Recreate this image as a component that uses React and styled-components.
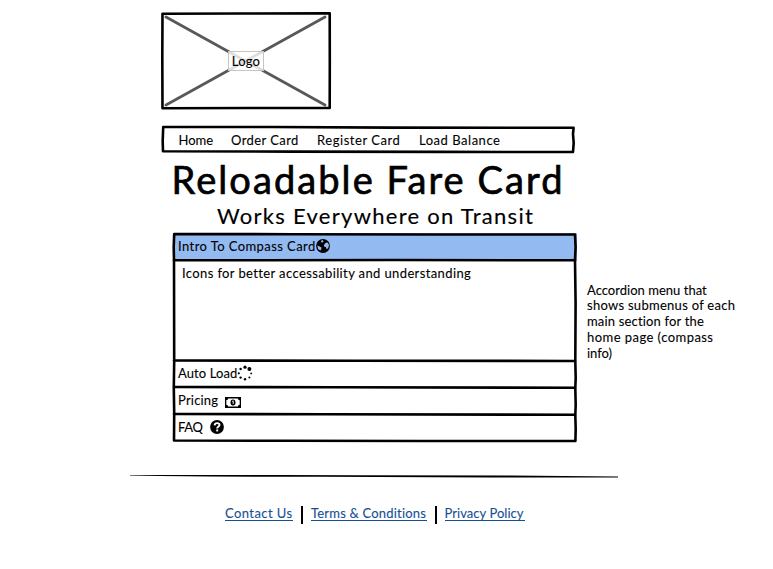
import React from "react";
import styled, { createGlobalStyle } from "styled-components";

const GlobalStyle = createGlobalStyle`
  *, *::before, *::after { box-sizing: border-box; }
  body { margin: 0; background: #fff; }
`;

const Page = styled.div`
  width: 773px;
  height: 569px;
  display: flex;
  flex-direction: column;
  align-items: flex-start;
  overflow: hidden;
  color: #000;
  font: 13px/16px Lato, "Open Sans", sans-serif;
  -webkit-text-stroke: 0.1px currentColor;
`;

const Outline = styled.svg`
  position: absolute;
  inset: 0;
  width: 100%;
  height: 100%;
  overflow: visible;
  pointer-events: none;
  fill: none;
  stroke: #000;
  stroke-width: 2.6;
  stroke-linecap: round;
  stroke-linejoin: round;
`;

const LogoBox = styled.div`
  position: relative;
  width: 170px;
  height: 97px;
  margin: 12px 0 0 161px;
  display: flex;
  align-items: center;
  justify-content: center;
`;

const Cross = styled.path`
  stroke: #595959;
  stroke-width: 2.8;
`;

const LogoLabel = styled.span`
  position: relative;
  width: 36px;
  height: 20px;
  border: 1px solid #c4c4c4;
  background: rgba(255, 255, 255, 0.8);
  text-align: center;
  line-height: 18px;
  letter-spacing: 0.2px;
`;

const Nav = styled.nav`
  position: relative;
  width: 413px;
  height: 27px;
  margin: 17px 0 0 162px;
  padding: 1px 0 0 16.5px;
  display: flex;
  align-items: center;
`;

const Label = styled.span`
  letter-spacing: ${(p) => p.$track}px;
  white-space: nowrap;
`;

const NavItem = styled(Label)`
  flex: 0 0 ${(p) => p.$width}px;
`;

const Title = styled.h1`
  margin: 0 0 0 171.5px;
  font-size: 38px;
  font-weight: 400;
  line-height: 53px;
  letter-spacing: 2.08px;
  white-space: nowrap;
  -webkit-text-stroke: 0.7px #000;
`;

const Subtitle = styled.h2`
  margin: 0 0 9px 217px;
  font-size: 22px;
  font-weight: 400;
  line-height: 19px;
  height: 18px;
  letter-spacing: 1.28px;
  white-space: nowrap;
  -webkit-text-stroke: 0.15px #000;
`;

const Content = styled.main`
  display: flex;
  align-items: flex-start;
  gap: 10px;
  margin-left: 173px;
`;

const Accordion = styled.section`
  position: relative;
  width: 404px;
  height: 209px;
  display: grid;
  grid-template-rows: 28px 100px repeat(3, 27px);
`;

const Row = styled.div`
  display: flex;
  align-items: center;
  gap: ${(p) => p.$gap}px;
  padding: 0 0 ${(p) => (p.$open ? 2 : 3)}px 5px;
  background: ${(p) => (p.$open ? "#94baf2" : "transparent")};
`;

const Panel = styled.div`
  padding: 4px 0 0 9px;
`;

const Icon = styled.svg`
  flex: none;
  width: ${(p) => p.$w}px;
  height: ${(p) => p.$h}px;
  margin-top: ${(p) => p.$drop || 0}px;
`;

const Note = styled.aside`
  display: flex;
  flex-direction: column;
  margin-top: 49.6px;
  line-height: 15.8px;
`;

const Rule = styled.svg`
  display: block;
  width: 488px;
  height: 4px;
  margin: 32px 0 0 130px;
`;

const Footer = styled.footer`
  display: flex;
  align-items: flex-start;
  margin: 28px 0 0 225px;
`;

const Link = styled.a`
  color: #154f93;
  height: 15px;
  line-height: 14px;
  border-bottom: 1px solid #154f93;
  letter-spacing: ${(p) => p.$track}px;
  width: ${(p) => p.$width}px;
  white-space: nowrap;
`;

const Divider = styled.span`
  width: 2px;
  height: 18px;
  margin: 0 8px;
  background: #000;
`;

const NAV = [
  { text: "Home", width: 52.5, track: 0 },
  { text: "Order Card", width: 86, track: 0.42 },
  { text: "Register Card", width: 102, track: 0.55 },
  { text: "Load Balance", width: 84, track: 0.52 },
];

const NOTE = [
  { text: "Accordion menu that", track: 0.02 },
  { text: "shows submenus of each", track: 0.28 },
  { text: "main section for the", track: 0.17 },
  { text: "home page (compass", track: 0.45 },
  { text: "info)", track: 0 },
];

const Globe = () => (
  <Icon $w={14} $h={14} viewBox="0 0 14 14">
    <circle cx="7" cy="7" r="6.9" />
    <path
      fill="#94baf2"
      d="M5.4 1.5 7.2 1.1 6.9 2.1 7.6 2.7 6.4 3.6 5.6 3.1 4.6 3.5ZM8.6 5 10.1 3.6 11.8 3.8 13 6.1 12.5 8.2 11.1 10.2 10.2 9.5 9.9 7.9 8.4 7.7 7.8 6.4ZM1.3 6.5 3.2 7.3 5.5 8.6 5.3 10 4.5 11.6 2.2 10.2Z"
    />
  </Icon>
);

const Spinner = () => (
  <Icon $w={16} $h={16} $drop={-1} viewBox="0 0 16 16">
    <circle cx="8" cy="2.2" r="1.6" />
    <circle cx="12.4" cy="4" r="2" />
    <circle cx="14.2" cy="8.4" r="0.9" />
    <circle cx="12.4" cy="12.6" r="1" />
    <circle cx="8" cy="14.2" r="1.2" />
    <circle cx="3.6" cy="12.6" r="1.2" />
    <circle cx="1.8" cy="8.3" r="1.1" />
    <circle cx="3.6" cy="4" r="1.2" />
  </Icon>
);

const Money = () => (
  <Icon $w={16} $h={11} $drop={4} viewBox="0 0 16 11">
    <rect width="16" height="11" />
    <path fill="#fff" d="M3.2 1.5H12.8A2 2 0 0 0 14.7 3.3V7.7A2 2 0 0 0 12.8 9.5H3.2A2 2 0 0 0 1.3 7.7V3.3A2 2 0 0 0 3.2 1.5Z" />
    <ellipse cx="8" cy="5.5" rx="2.5" ry="3" />
    <path stroke="#fff" strokeWidth="0.9" fill="none" d="M7.2 4.5 8.2 3.8V7" />
  </Icon>
);

const Help = () => (
  <Icon $w={14} $h={14} viewBox="0 0 14 14">
    <circle cx="7" cy="7" r="6.9" />
    <path fill="none" stroke="#fff" strokeWidth="1.9" d="M4.6 5.3C4.8 3.5 6 3.1 7.1 3.1 8.5 3.1 9.5 3.9 9.5 5 9.5 6.6 7.2 6.5 7.2 8.5" />
    <path fill="#fff" d="M6.2 9.5h2v1.9h-2z" />
  </Icon>
);

export default function App() {
  return (
    <Page>
      <GlobalStyle />
      <LogoBox>
        <Outline viewBox="0 0 170 97">
          <Cross d="M5 5 164 93M164 5 5 93" />
          <path d="M1.5 1.8 80 1.5 168.7 1.2 168.8 50 168.7 96 90 96 1.5 96.3 1.3 45Z" />
        </Outline>
        <LogoLabel>Logo</LogoLabel>
      </LogoBox>

      <Nav>
        <Outline viewBox="0 0 413 27">
          <path d="M1.2 1 110 1 230 1.6 411.6 1.8 411 8 411.7 17 411 26 280 25.9 130 25.6 1 25.2 .7 15Z" />
        </Outline>
        {NAV.map((n) => (
          <NavItem key={n.text} $width={n.width} $track={n.track}>
            {n.text}
          </NavItem>
        ))}
      </Nav>

      <Title>Reloadable Fare Card</Title>
      <Subtitle>Works Everywhere on Transit</Subtitle>

      <Content>
        <Accordion>
          <Row $open $gap={0}>
            <Label $track={0.42}>Intro To Compass Card</Label>
            <Globe />
          </Row>
          <Panel>
            <Label $track={0.38}>Icons for better accessability and understanding</Label>
          </Panel>
          <Row $gap={0}>
            <Label $track={0.1}>Auto Load</Label>
            <Spinner />
          </Row>
          <Row $gap={7}>
            <Label $track={0.2}>Pricing</Label>
            <Money />
          </Row>
          <Row $gap={7.5}>
            <Label $track={-0.3}>FAQ</Label>
            <Help />
          </Row>
          <Outline viewBox="0 0 404 209">
            <path d="M1.2 1 120 1.2 260 1.5 402 1.5 402.6 14 402 27 402.6 70 402.3 128 402.7 145 402.3 155 402.7 172 402.3 182 402.7 196 402.4 208 250 208 110 207.8 1 207.5 1.2 180 .8 155 1.2 128 1 27 .7 14Z" />
            <path d="M1 27.3 90 27.3 220 27 402 27.3M1 127.5 180 127.7 402 128M1 154 160 154.3 402 154.8M1 181 150 181.3 402 181.8" />
          </Outline>
        </Accordion>
        <Note>
          {NOTE.map((n) => (
            <Label key={n.text} $track={n.track}>
              {n.text}
            </Label>
          ))}
        </Note>
      </Content>

      <Rule viewBox="0 0 488 4">
        <path d="M0 1 150 1 230 1.2 380 1.6 488 2.5V3.5H360L190 2.8 80 2.6 30 1.9 0 1.6Z" />
      </Rule>

      <Footer>
        <Link $width={68} $track={0.42}>Contact Us</Link>
        <Divider />
        <Link $width={115.5} $track={0.2}>Terms &amp; Conditions</Link>
        <Divider />
        <Link $width={80} $track={0.05}>Privacy Policy</Link>
      </Footer>
    </Page>
  );
}
